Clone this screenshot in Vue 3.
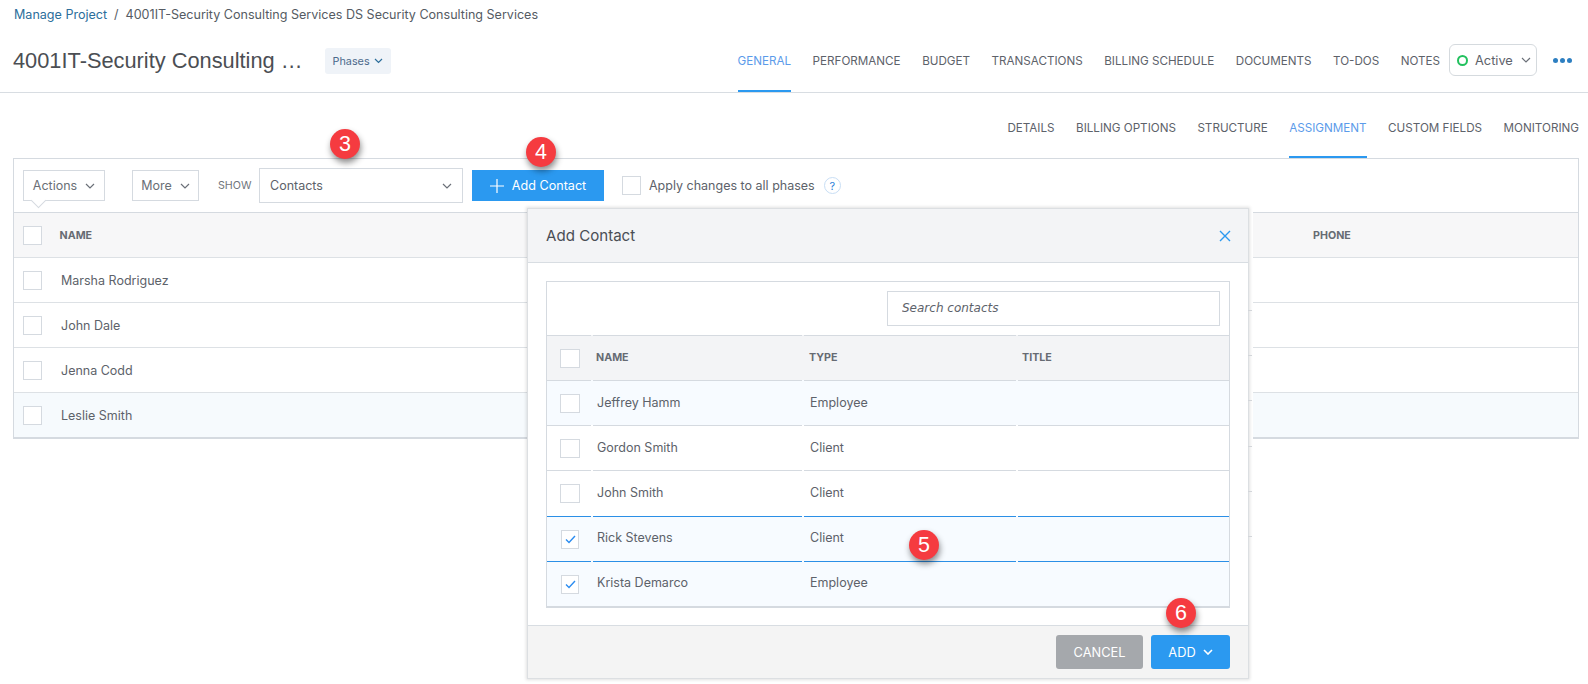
<template>
  <div class="page">
    <div class="crumbs">
      <a class="crumb-link">Manage Project</a>
      <span class="crumb-sep">/</span>
      <span>4001IT-Security Consulting Services DS Security Consulting Services</span>
    </div>

    <header class="head">
      <h1 class="title">4001IT-Security Consulting …</h1>
      <button class="phases">
        Phases
        <svg class="chev" width="9" height="6" viewBox="0 0 9 6"><path d="M1 1l3.5 3.5L8 1" /></svg>
      </button>
      <nav class="tabs">
        <a v-for="t in mainTabs" :key="t" class="tab" :class="{ active: t === 'GENERAL' }">{{ t }}</a>
      </nav>
      <div class="status">
        <span class="status-ring"></span>
        <span>Active</span>
        <svg class="chev" width="10" height="6" viewBox="0 0 10 6"><path d="M1 1l4 4 4-4" /></svg>
      </div>
      <div class="dots"><i></i><i></i><i></i></div>
    </header>

    <nav class="subtabs">
      <a v-for="t in subTabs" :key="t" class="tab" :class="{ active: t === 'ASSIGNMENT' }">{{ t }}</a>
    </nav>

    <section class="panel">
      <div class="toolbar">
        <button class="tool actions">
          Actions
          <svg class="chev" width="10" height="6" viewBox="0 0 10 6"><path d="M1 1l4 4 4-4" /></svg>
        </button>
        <button class="tool more">
          More
          <svg class="chev" width="10" height="6" viewBox="0 0 10 6"><path d="M1 1l4 4 4-4" /></svg>
        </button>
        <span class="show">SHOW</span>
        <div class="select">
          <span>Contacts</span>
          <svg class="chev" width="10" height="6" viewBox="0 0 10 6"><path d="M1 1l4 4 4-4" /></svg>
        </div>
        <button class="add-contact">
          <svg class="plus" width="14" height="14" viewBox="0 0 14 14"><path d="M7 0v14M0 7h14" /></svg>
          Add Contact
        </button>
        <span class="box apply-box"></span>
        <span class="apply">Apply changes to all phases</span>
        <span class="help">?</span>
      </div>

      <div class="main-row main-head">
        <div class="cell"><span class="box"></span></div>
        <div class="cell th">NAME</div>
        <div class="cell th">PHONE</div>
      </div>
      <div v-for="(c, i) in contacts" :key="c" class="main-row" :class="{ tint: i === 3 }">
        <div class="cell"><span class="box"></span></div>
        <div class="cell">{{ c }}</div>
        <div class="cell"></div>
      </div>
    </section>

    <div class="modal">
      <div class="modal-head">
        <span>Add Contact</span>
        <svg class="close" width="12" height="12" viewBox="0 0 12 12"><path d="M1 1l10 10M11 1L1 11" /></svg>
      </div>
      <div class="modal-body">
        <div class="pick-table">
          <div class="search-row">
            <input class="search" placeholder="Search contacts" />
          </div>
          <div class="pick-row pick-head">
            <div class="pcell"><span class="box big"></span></div>
            <div class="pcell th">NAME</div>
            <div class="pcell th">TYPE</div>
            <div class="pcell th">TITLE</div>
          </div>
          <div
            v-for="p in people"
            :key="p.name"
            class="pick-row"
            :class="{ tint: p.tint, selected: p.checked }"
          >
            <div class="pcell">
              <span class="box" :class="p.checked ? 'small' : 'big'">
                <svg v-if="p.checked" width="11" height="9" viewBox="0 0 11 9"><path d="M1 4.5l3 3L10 1" /></svg>
              </span>
            </div>
            <div class="pcell">{{ p.name }}</div>
            <div class="pcell">{{ p.type }}</div>
            <div class="pcell"></div>
          </div>
        </div>
      </div>
      <div class="modal-foot">
        <button class="btn cancel">CANCEL</button>
        <button class="btn add">
          ADD
          <svg width="10" height="6" viewBox="0 0 10 6"><path d="M1 1l4 4 4-4" /></svg>
        </button>
      </div>
    </div>

    <!-- numbered callouts placed over the shot -->
    <span
      v-for="b in badges"
      :key="b.n"
      class="badge"
      :style="{ left: b.x + 'px', top: b.y + 'px' }"
    >{{ b.n }}</span>
  </div>
</template>

<script setup>
const mainTabs = ['GENERAL', 'PERFORMANCE', 'BUDGET', 'TRANSACTIONS', 'BILLING SCHEDULE', 'DOCUMENTS', 'TO-DOS', 'NOTES']
const subTabs = ['DETAILS', 'BILLING OPTIONS', 'STRUCTURE', 'ASSIGNMENT', 'CUSTOM FIELDS', 'MONITORING']
const contacts = ['Marsha Rodriguez', 'John Dale', 'Jenna Codd', 'Leslie Smith']
const people = [
  { name: 'Jeffrey Hamm', type: 'Employee', tint: true },
  { name: 'Gordon Smith', type: 'Client' },
  { name: 'John Smith', type: 'Client' },
  { name: 'Rick Stevens', type: 'Client', tint: true, checked: true },
  { name: 'Krista Demarco', type: 'Employee', tint: true, checked: true },
]
const badges = [
  { n: 3, x: 330, y: 129 },
  { n: 4, x: 526, y: 137 },
  { n: 5, x: 909, y: 530 },
  { n: 6, x: 1166, y: 598 },
]
</script>

<style>
html, body { margin: 0; background: #fff; }
</style>

<style scoped>
.page {
  position: relative;
  width: 1588px;
  height: 684px;
  overflow: hidden;
  background: #fff;
  font-family: Inter, "Noto Sans", sans-serif;
  font-size: 12.5px;
  color: #5d626a;
}
button { font-family: inherit; cursor: pointer; }
.chev { fill: none; stroke: #6b7078; stroke-width: 1.2; }

.crumbs {
  height: 30px;
  padding-left: 14px;
  line-height: 30px;
  font-size: 12.55px;
  color: #555b63;
}
.crumb-link { color: #2c6e9b; }
.crumb-sep { margin: 0 7px; }

.head {
  display: flex;
  align-items: center;
  height: 62px;
  padding-right: 16px;
  border-bottom: 1px solid #d8dde2;
}
.title {
  margin: 0 0 0 13px;
  font-family: "Liberation Sans", Arial, sans-serif;
  font-size: 21.8px;
  font-weight: 400;
  color: #4b4e53;
  white-space: nowrap;
}
.phases {
  display: flex;
  align-items: center;
  gap: 4px;
  height: 26px;
  margin-left: 22px;
  padding: 0 8px;
  border: 0;
  border-radius: 3px;
  background: #eff3f8;
  color: #4c6a8c;
  font-size: 10.8px;
}
.phases .chev { stroke: #2c6e9b; }
.tabs {
  display: flex;
  align-self: stretch;
  gap: 21.5px;
  margin-left: auto;
}
.tab {
  display: flex;
  align-items: center;
  box-sizing: border-box;
  border-bottom: 2px solid transparent;
  border-top: 2px solid transparent;
  font-size: 11.65px;
  color: #5d626a;
  white-space: nowrap;
}
.tab.active { color: #5b9bea; border-bottom-color: #2b99f0; }
.status {
  display: flex;
  align-items: center;
  box-sizing: border-box;
  width: 88px;
  height: 32px;
  margin: 0 0 2px 9px;
  padding-left: 7px;
  gap: 7px;
  border: 1px solid #d5dade;
  border-radius: 6px;
  font-size: 12.8px;
}
.status-ring {
  box-sizing: border-box;
  width: 11px;
  height: 11px;
  border: 2px solid #22c15e;
  border-radius: 50%;
}
.status .chev { margin-left: 1px; }
.dots {
  display: flex;
  gap: 2px;
  margin: 0 0 2px 16px;
}
.dots i {
  width: 5px;
  height: 5px;
  border-radius: 50%;
  background: #2d7fc1;
}

.subtabs {
  display: flex;
  justify-content: flex-end;
  gap: 21.5px;
  height: 65px;
  padding-right: 9px;
}
.subtabs .tab { padding-top: 4px; }

.panel {
  margin: 0 9px 0 13px;
  border: 1px solid #d5dae0;
  border-bottom-width: 2px;
}
.toolbar {
  display: flex;
  align-items: center;
  height: 53px;
  padding-left: 9px;
}
.tool {
  position: relative;
  display: flex;
  align-items: center;
  justify-content: center;
  gap: 8px;
  box-sizing: border-box;
  height: 31px;
  border: 1px solid #d5dae0;
  background: #fff;
  color: #6a6f76;
  font-size: 12.5px;
}
.actions { width: 82px; margin-right: 27px; }
/* little pointer under the Actions button */
.actions::after {
  content: "";
  position: absolute;
  left: 9px;
  bottom: -6px;
  width: 10px;
  height: 10px;
  background: #fff;
  border-right: 1px solid #d5dae0;
  border-bottom: 1px solid #d5dae0;
  transform: rotate(45deg);
}
.more { width: 67px; margin-right: 19px; }
.show { width: 32px; margin-right: 9px; font-size: 10.7px; color: #70757c; }
.select {
  display: flex;
  align-items: center;
  justify-content: space-between;
  box-sizing: border-box;
  width: 204px;
  height: 35px;
  margin-right: 9px;
  padding: 0 10px;
  border: 1px solid #d5dae0;
}
.add-contact {
  display: flex;
  align-items: center;
  justify-content: center;
  gap: 8px;
  width: 132px;
  height: 31px;
  margin-right: 18px;
  border: 0;
  background: #2b99f0;
  color: #fff;
  font-size: 12.6px;
}
.plus { fill: none; stroke: #fff; stroke-width: 1.2; }
.box {
  display: flex;
  align-items: center;
  justify-content: center;
  box-sizing: border-box;
  width: 19px;
  height: 19px;
  flex: none;
  border: 1px solid #d5dae0;
  background: #fff;
}
.box.big { width: 20px; height: 19px; }
.box.small { width: 18px; height: 19px; margin-left: 1px; }
.box svg { fill: none; stroke: #2b8cf0; stroke-width: 1.4; }
.apply-box { margin-right: 8px; }
.apply { margin-right: 9px; white-space: nowrap; }
.help {
  display: flex;
  align-items: center;
  justify-content: center;
  box-sizing: border-box;
  width: 17px;
  height: 17px;
  border: 1px solid #c8def5;
  border-radius: 50%;
  color: #2b7fd8;
  font-size: 11px;
}

.main-row {
  display: grid;
  grid-template-columns: 47px 1fr 270px;
  height: 45px;
}
.main-row.tint { background: #f6fafd; }
.main-head { background: #f7f7f8; }
.cell {
  display: flex;
  align-items: center;
  box-sizing: border-box;
  padding-top: 1px;
  border-top: 1px solid #d5dae0;
}
.main-row .cell:first-child { padding-left: 9px; }
.main-row .cell:nth-child(3) { padding-left: 5px; }
.main-head .cell:nth-child(2) { text-indent: -1.5px; }
.th { font-size: 10.7px; font-weight: 700; color: #666b73; }
.main-row:not(.main-head) .cell { border-top-color: #dde1e5; }

.modal {
  position: absolute;
  left: 527px;
  top: 208px;
  display: flex;
  flex-direction: column;
  box-sizing: border-box;
  width: 722px;
  height: 471px;
  border: 1px solid #dcdfe2;
  background: #fff;
  box-shadow: 0 0 3px 1px rgba(0, 0, 0, 0.12), 3px 0 0 1px #fff;
}
/* stray row ends that peek out past the dialog's right edge */
.modal::after {
  content: "";
  position: absolute;
  left: 100%;
  top: 101px;
  width: 4px;
  height: 230px;
  background: repeating-linear-gradient(to bottom, #d3d6da 0, #d3d6da 1px, transparent 1px, transparent 45.2px);
}
.modal-head {
  display: flex;
  align-items: center;
  justify-content: space-between;
  box-sizing: border-box;
  height: 54px;
  padding: 0 17px 0 18px;
  border-bottom: 1px solid #d8dde2;
  background: #f3f4f6;
  font-size: 15.1px;
  color: #4a4e55;
}
.close { fill: none; stroke: #2b99f0; stroke-width: 1.4; }
.modal-body {
  flex: 1;
  padding: 18px 18px 0 18px;
}
.pick-table {
  border: 1px solid #d5dae0;
  border-bottom-width: 2px;
}
.search-row {
  display: flex;
  justify-content: flex-end;
  align-items: center;
  height: 53px;
  padding-right: 9px;
}
.search {
  box-sizing: border-box;
  width: 333px;
  height: 35px;
  margin-bottom: 1px;
  padding: 0 14px;
  border: 1px solid #d5dae0;
  outline: none;
  font-family: "DejaVu Sans", sans-serif;
  font-size: 12px;
  font-style: italic;
}
.search::placeholder { color: #5d626a; opacity: 1; }
.pick-row {
  display: grid;
  grid-template-columns: 44px 209px 212px 1fr;
  column-gap: 2px;
  height: 45.2px;
}
.pick-row.tint { background: #f7fbff; }
.pick-head { height: 45px; background: #f3f4f6; }
.pcell {
  display: flex;
  align-items: center;
  box-sizing: border-box;
  padding-left: 5px;
  padding-bottom: 2px;
  border-top: 1px solid #d5dae0;
}
.pick-row .pcell:first-child { padding: 1px 0 0 13px; }
.pick-row .pcell:nth-child(2) { padding-left: 4px; }
.pick-row .pcell:nth-child(3) { padding-left: 6px; }
.pick-head .pcell:nth-child(2) { padding-left: 3px; }
.pick-head .pcell:nth-child(3) { padding-left: 5px; }
.pick-head .pcell:nth-child(4) { padding-left: 4px; }
.pick-row.selected .pcell { border-top-color: #2b8fe6; }

.modal-foot {
  display: flex;
  align-items: center;
  justify-content: flex-end;
  gap: 8px;
  box-sizing: border-box;
  height: 53px;
  padding: 0 18px 0 0;
  border-top: 1px solid #d8dde2;
  background: #f4f4f4;
}
.btn {
  display: flex;
  align-items: center;
  justify-content: center;
  gap: 7px;
  height: 34px;
  border: 0;
  border-radius: 3px;
  color: #fff;
  font-size: 12.8px;
}
.btn svg { fill: none; stroke: #fff; stroke-width: 1.6; }
.cancel { width: 87px; background: #a5a8ac; }
.add { width: 79px; background: #2b99f0; }

.badge {
  position: absolute;
  display: flex;
  align-items: center;
  justify-content: center;
  width: 30px;
  height: 30px;
  border-radius: 50%;
  background: #f53b40;
  box-shadow: 1px 4px 6px rgba(0, 0, 0, 0.45);
  color: #fff;
  font-family: "Liberation Sans", Arial, sans-serif;
  font-size: 21.5px;
}
</style>
